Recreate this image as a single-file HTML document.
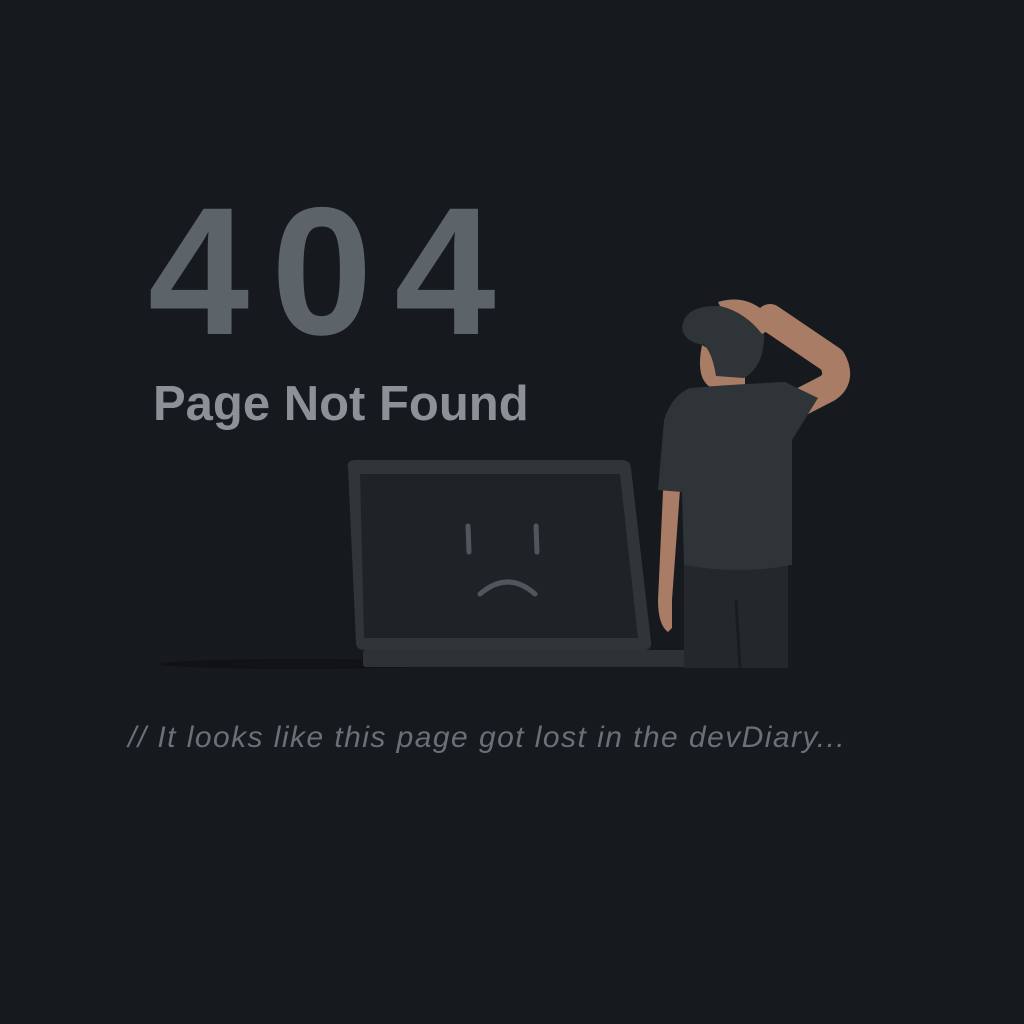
<!DOCTYPE html>
<html><head><style>
body{margin:0;width:1024px;height:1024px;background:#16191d;overflow:hidden;position:relative;font-family:"Liberation Sans",sans-serif}
.t{position:absolute;white-space:nowrap}
</style></head><body>
<div class="t" style="left:148px;top:180px;font-size:182px;font-weight:bold;color:#5d6469;letter-spacing:22px;line-height:1">404</div>
<div class="t" style="left:153px;top:380px;font-size:49px;font-weight:bold;color:#8b9196;line-height:1;letter-spacing:0px">Page Not Found</div>
<div class="t" style="left:128px;top:723px;font-size:30px;font-style:italic;color:#6a7176;line-height:1;letter-spacing:1.45px">// It looks like this page got lost in the devDiary...</div>
<svg width="1024" height="1024" style="position:absolute;left:0;top:0">
<ellipse cx="300" cy="664" rx="140" ry="5" fill="#101215"/>
<path d="M348 468 Q346 460 356 460 L622 460 Q630 460 631 468 L651 642 Q652 650 644 650 L364 650 Q356 650 356 642 Z" fill="#30353a"/>
<path d="M360 474 L620 474 L638 638 L364 638 Z" fill="#1f2327"/>
<rect x="363" y="650" width="325" height="17" rx="3" fill="#2d3236"/>
<g stroke="#50575c" stroke-width="5" stroke-linecap="round" fill="none">
<line x1="468" y1="526" x2="469" y2="552"/><line x1="536" y1="526" x2="537" y2="552"/>
<path d="M480 594 Q508 570 535 594"/></g>
<path d="M664 470 L658 600 Q658 625 668 632 L672 628 L672 600 L680 490 Z" fill="#a87c65"/>
<rect x="684" y="560" width="104" height="108" fill="#24282b"/>
<path d="M795 405 L828 388 Q842 378 832 360 L770 318" stroke="#a87c65" stroke-width="28" stroke-linecap="round" stroke-linejoin="round" fill="none"/>
<path d="M702 345 Q695 380 712 388 L712 392 L745 392 L745 370 Z" fill="#a87c65"/>
<path d="M690 388 Q720 385 785 382 L818 398 L792 440 L792 565 Q740 575 684 565 L682 492 L658 490 L664 420 Q672 395 690 388 Z" fill="#2f3438"/>
<path d="M682 328 Q684 306 716 306 Q756 302 764 330 Q766 365 744 378 L716 376 Q712 352 704 345 Q684 342 682 328 Z" fill="#2f3438"/>
<path d="M718 302 Q745 294 765 312 L778 325 L762 334 Q745 312 720 306 Z" fill="#a87c65"/>
<line x1="736" y1="600" x2="740" y2="668" stroke="#1a1d20" stroke-width="3"/>
</svg>
</body></html>
